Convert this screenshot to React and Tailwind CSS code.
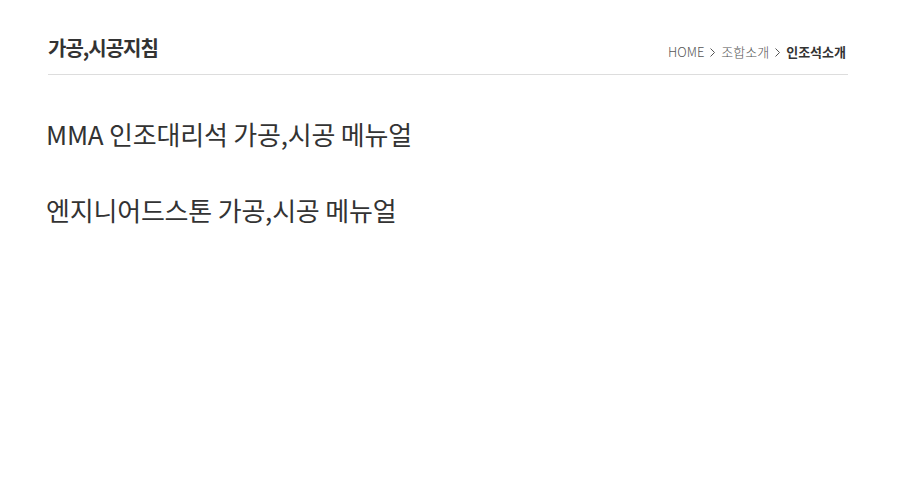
import React from "react";

const Chevron = () => (
  <svg width="7" height="11" viewBox="0 0 7 11" className="mx-[5px]" fill="none">
    <path d="M1.5 1.5 L5.5 5.5 L1.5 9.5" stroke="#555" strokeWidth="1" />
  </svg>
);

export default function App() {
  return (
    <div className="w-full min-h-[499px] bg-white" style={{ fontFamily: '"Noto Sans CJK KR", "Noto Sans", sans-serif' }}>
      <div className="ml-[48px] w-[800px] pt-[34px]">
        <div className="flex items-end justify-between border-b border-[#dddddd] pb-[12px]">
          <h2 className="text-[20px] font-bold leading-[28px] tracking-[-1px] text-[#333]">가공,시공지침</h2>
          <div className="flex items-center pb-[1px] pr-[2px] text-[13px] leading-[18px] text-[#555]">
            <span className="font-light">HOME</span>
            <Chevron />
            <span className="font-light">조합소개</span>
            <Chevron />
            <span className="font-bold text-[#333]">인조석소개</span>
          </div>
        </div>
        <div className="pt-[40px] flex flex-col gap-[38px]">
          <p className="-ml-[2px] text-[26px] leading-[38px] tracking-[-0.2px] text-[#333]">MMA 인조대리석 가공,시공 메뉴얼</p>
          <p className="-ml-[2px] text-[26px] leading-[38px] tracking-[-0.2px] text-[#333]">엔지니어드스톤 가공,시공 메뉴얼</p>
        </div>
      </div>
    </div>
  );
}
